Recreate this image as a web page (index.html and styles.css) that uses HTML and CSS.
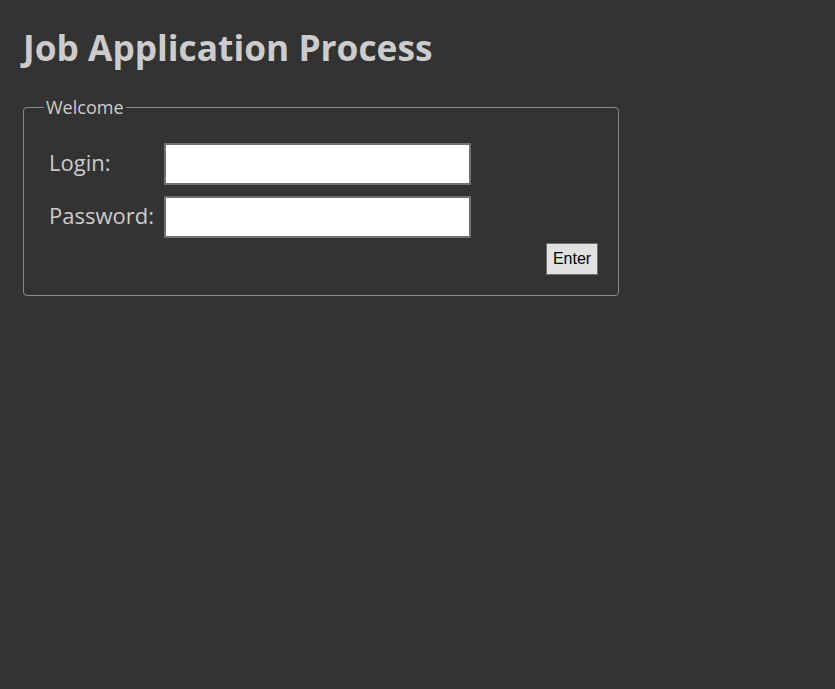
FILE: index.html
```html
<!DOCTYPE html>
<html>
<head>
<meta charset="utf-8">
<link rel="stylesheet" href="styles.css">
</head>
<body>
<h1 class="title">Job Application Process</h1>
<fieldset class="panel">
  <legend class="legend">Welcome</legend>
  <div class="form">
    <label class="label" for="login">Login:</label>
    <input class="field" id="login" type="text">
    <label class="label" for="password">Password:</label>
    <input class="field" id="password" type="password">
  </div>
  <div class="actions">
    <button class="btn" type="button">Enter</button>
  </div>
</fieldset>
</body>
</html>
```

FILE: styles.css
```css
html, body {
  margin: 0;
  background: #333333;
}
body {
  padding: 0 20px;
  color: #cccccc;
  font-family: "Open Sans", "Noto Sans", sans-serif;
}
.title {
  margin: 0;
  padding: 24px 0 0 3px;
  font-size: 35.3px;
  line-height: 46px;
  font-weight: 700;
  color: #cccccc;
}
.panel {
  width: 554px;
  margin: 26px 0 0 3px;
  padding: 0 20px 20px 20px;
  border: 1px solid #8a8a8a;
  border-radius: 4px;
}
.legend {
  padding: 0 2px;
  font-size: 18px;
  line-height: 22px;
  color: #cccccc;
}
.form {
  display: grid;
  grid-template-columns: 115px 307px;
  row-gap: 11px;
  align-items: center;
  margin: 25px 0 0 5px;
}
.label {
  padding-bottom: 4px;
  font-size: 22px;
  color: #cccccc;
}
.field {
  box-sizing: border-box;
  width: 307px;
  height: 42px;
  margin: 0;
  border: 2px solid #707070;
  background: #ffffff;
}
.actions {
  display: flex;
  justify-content: flex-end;
  margin-top: 5px;
}
.btn {
  box-sizing: border-box;
  height: 32px;
  width: 52px;
  padding: 0;
  border: 1px solid #707070;
  background: #e1e1e1;
  color: #000000;
  font-family: "Liberation Sans", Arial, sans-serif;
  font-size: 16px;
}
```
